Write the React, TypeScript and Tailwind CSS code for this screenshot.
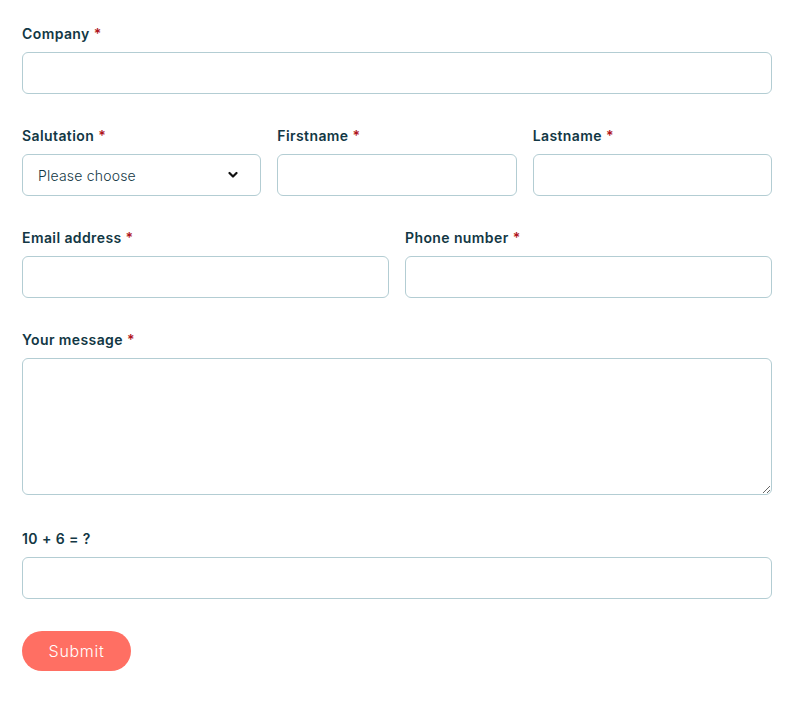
import React from 'react';

function Label({ text, required = true }: { text: string; required?: boolean }) {
  return (
    <label className="mb-2 block text-[14px] font-semibold leading-5 tracking-[0.4px] text-[#123744]">
      {text}
      {required && <span className="ml-1 text-[#b0141c]">*</span>}
    </label>
  );
}

const inputCls =
  'block h-[42px] w-full rounded-[6px] border border-[#b3cdd3] bg-white px-[15px] text-[14px] text-[#123744] outline-none';

export default function App() {
  return (
    <div className="min-h-screen bg-white" style={{ fontFamily: 'Inter, "Noto Sans", sans-serif' }}>
      <form className="ml-[22px] flex w-[750px] flex-col gap-8 pt-6">
        <div>
          <Label text="Company" />
          <input className={inputCls} />
        </div>

        <div className="grid grid-cols-3 gap-4">
          <div>
            <Label text="Salutation" />
            <div className="relative">
              <select
                className={`${inputCls} appearance-none font-light tracking-[0.2px] text-[#4a5b61]`}
                defaultValue=""
              >
                <option value="">Please choose</option>
                <option>Mr.</option>
                <option>Ms.</option>
              </select>
              <svg
                className="pointer-events-none absolute right-[23px] top-1/2 -translate-y-1/2"
                width="10"
                height="7"
                viewBox="0 0 10 7"
              >
                <path
                  d="M1.5 1.5 5 5l3.5-3.5"
                  fill="none"
                  stroke="#111"
                  strokeWidth="2.2"
                  strokeLinecap="round"
                  strokeLinejoin="round"
                />
              </svg>
            </div>
          </div>
          <div>
            <Label text="Firstname" />
            <input className={inputCls} />
          </div>
          <div>
            <Label text="Lastname" />
            <input className={inputCls} />
          </div>
        </div>

        <div className="grid grid-cols-2 gap-4">
          <div>
            <Label text="Email address" />
            <input className={inputCls} />
          </div>
          <div>
            <Label text="Phone number" />
            <input className={inputCls} />
          </div>
        </div>

        <div className="mb-[2px]">
          <Label text="Your message" />
          <textarea className="block h-[137px] w-full rounded-[6px] border border-[#b3cdd3] bg-white px-[15px] py-2 text-[14px] outline-none" />
        </div>

        <div>
          <Label text="10 + 6 = ?" required={false} />
          <input className={inputCls} />
        </div>

        <div>
          <button
            type="button"
            className="h-10 w-[109px] rounded-full bg-[#ff6f63] text-[16px] font-light tracking-[0.7px] text-white"
          >
            Submit
          </button>
        </div>
      </form>
    </div>
  );
}
